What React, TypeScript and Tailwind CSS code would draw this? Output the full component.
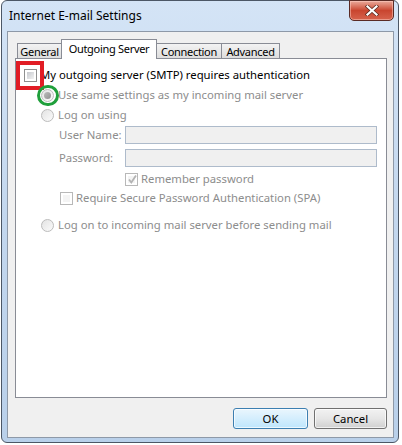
import React from "react";

const font = { fontFamily: '"Noto Sans", "Open Sans", sans-serif' };

function CheckBox({ disabled, checked }: { disabled?: boolean; checked?: boolean }) {
  return (
    <div
      className={`relative w-[13px] h-[13px] shrink-0 border ${
        disabled ? "border-[#b8b8b8]" : "border-[#8e8f8f]"
      } bg-white p-[2px]`}
    >
      <div
        className={`w-full h-full ${
          disabled
            ? "bg-[#f4f4f4]"
            : "bg-gradient-to-br from-[#c6c9ce] to-[#f3f3f3]"
        }`}
      />
      {checked && (
        <svg className="absolute left-[1px] top-[0px]" width="11" height="11" viewBox="0 0 11 11">
          <path d="M2 5.5 L4.3 8.5 L9 1.5" fill="none" stroke="#b3b3b3" strokeWidth="1.8" />
        </svg>
      )}
    </div>
  );
}

function Radio({ selected }: { selected?: boolean }) {
  return (
    <div className="w-[13px] h-[13px] shrink-0 rounded-full border border-[#bcbcbc] bg-gradient-to-br from-[#e3e3e3] to-[#fbfbfb] flex items-center justify-center">
      {selected && (
        <div className="w-[7px] h-[7px] rounded-full bg-gradient-to-br from-[#bdbdbd] to-[#8f8f8f]" />
      )}
    </div>
  );
}

export default function App() {
  return (
    <div className="w-[402px] h-[445px] bg-white overflow-hidden text-[11.3px] text-black" style={font}>
      <div className="ml-[1px] w-[398px] h-[443px] rounded-[6px] border border-[#4c5766] bg-gradient-to-b from-[#d4e4f6] via-[#c3d7ee] to-[#b9d0ea] flex flex-col">
        {/* Title bar */}
        <div className="h-[30px] flex justify-between">
          <div className="pl-[7px] pt-[6px] text-[12px] text-black leading-[18px]">Internet E-mail Settings</div>
          <div className="-mt-px mr-[4px] w-[45px] h-[21px] rounded-b-[5px] border border-[#5a2b25] bg-gradient-to-b from-[#e9a99b] via-[#c9452f] to-[#d6624c] flex items-center justify-center shadow-[inset_0_0_0_1px_rgba(255,210,200,0.5)]">
            <svg width="14" height="11" viewBox="0 0 14 11">
              <path d="M2.5 1.5 L11.5 9.5 M11.5 1.5 L2.5 9.5" stroke="#5a2a20" strokeWidth="3.6" strokeLinecap="square" />
              <path d="M2.5 1.5 L11.5 9.5 M11.5 1.5 L2.5 9.5" stroke="#ffffff" strokeWidth="2.2" strokeLinecap="square" />
            </svg>
          </div>
        </div>

        {/* Client area */}
        <div className="ml-[5px] w-[387px] h-[407px] border border-[#8e99a8] bg-[#f0f0f0] flex flex-col pt-[7px] pl-[7px]">
          {/* Tabs */}
          <div className="h-[20px] flex items-end pl-[2px] text-[11px] tracking-[-0.3px]">
            <div className="w-[45px] h-[16px] border border-b-0 border-[#898c95] bg-gradient-to-b from-[#f3f3f3] to-[#dcdcdc] flex items-center justify-center leading-none">
              General
            </div>
            <div className="relative z-10 -ml-px w-[96px] h-[20px] border border-b-0 border-[#898c95] bg-white flex items-start justify-center pt-[2px] leading-[13px]">
              Outgoing Server
            </div>
            <div className="-ml-px w-[66px] h-[16px] border border-b-0 border-[#898c95] bg-gradient-to-b from-[#f3f3f3] to-[#dcdcdc] flex items-center justify-center leading-none">
              Connection
            </div>
            <div className="-ml-px w-[59px] h-[16px] border border-b-0 border-[#898c95] bg-gradient-to-b from-[#f3f3f3] to-[#dcdcdc] flex items-center justify-center leading-none">
              Advanced
            </div>
          </div>

          {/* Panel */}
          <div className="relative -mt-px w-[372px] h-[340px] border border-[#898c95] bg-white flex flex-col">
            {/* Row 1 */}
            <div className="mt-[6px] h-[20px] flex items-center pl-[8px] gap-[3px]">
              <CheckBox />
              <span>My outgoing server (SMTP) requires authentication</span>
            </div>
            {/* Row 2 */}
            <div className="h-[20px] flex items-center pl-[25px] gap-[4px] text-[#8d8d8d]">
              <Radio selected />
              <span>Use same settings as my incoming mail server</span>
            </div>
            {/* Row 3 */}
            <div className="h-[20px] flex items-center pl-[25px] gap-[4px] text-[#8d8d8d]">
              <Radio />
              <span>Log on using</span>
            </div>
            {/* User name */}
            <div className="mt-[1px] h-[18px] flex items-center pl-[43px] text-[#8d8d8d]">
              <span className="w-[66px]">User Name:</span>
              <div className="w-[252px] h-[18px] border border-[#aebbcb] bg-[#f0f0f0]" />
            </div>
            {/* Password */}
            <div className="mt-[5px] h-[18px] flex items-center pl-[43px] text-[#8d8d8d]">
              <span className="w-[66px]">Password:</span>
              <div className="w-[252px] h-[18px] border border-[#aebbcb] bg-[#f0f0f0]" />
            </div>
            {/* Remember */}
            <div className="mt-[3px] h-[18px] flex items-center pl-[109px] gap-[3px] text-[#8d8d8d]">
              <CheckBox disabled checked />
              <span>Remember password</span>
            </div>
            {/* SPA */}
            <div className="mt-[1px] h-[18px] flex items-center pl-[44px] gap-[3px] text-[#8d8d8d]">
              <CheckBox disabled />
              <span>Require Secure Password Authentication (SPA)</span>
            </div>
            {/* Log on to incoming */}
            <div className="mt-[9px] h-[18px] flex items-center pl-[25px] gap-[4px] text-[#8d8d8d]">
              <Radio />
              <span>Log on to incoming mail server before sending mail</span>
            </div>

            {/* Annotations */}
            <div className="absolute left-[0px] top-[2px] w-[28px] h-[29px] border-[4px] border-[#e11d25]" />
            <div className="absolute left-[21px] top-[26px] w-[22px] h-[21px] rounded-full border-[3px] border-[#1f9f3b]" />
          </div>

          {/* Buttons */}
          <div className="mt-[10px] w-[372px] flex justify-end gap-[6px]">
            <button className="w-[75px] h-[21px] rounded-[3px] border border-[#3c7fb1] bg-gradient-to-b from-[#eaf6fd] to-[#bee6fd] shadow-[inset_0_0_0_1px_rgba(255,255,255,0.7)] text-black leading-none">
              OK
            </button>
            <button className="w-[73px] h-[21px] rounded-[3px] border border-[#707070] bg-gradient-to-b from-[#f2f2f2] via-[#e6e6e6] to-[#d0d0d0] shadow-[inset_0_0_0_1px_rgba(255,255,255,0.7)] text-black leading-none">
              Cancel
            </button>
          </div>
        </div>
      </div>
    </div>
  );
}
